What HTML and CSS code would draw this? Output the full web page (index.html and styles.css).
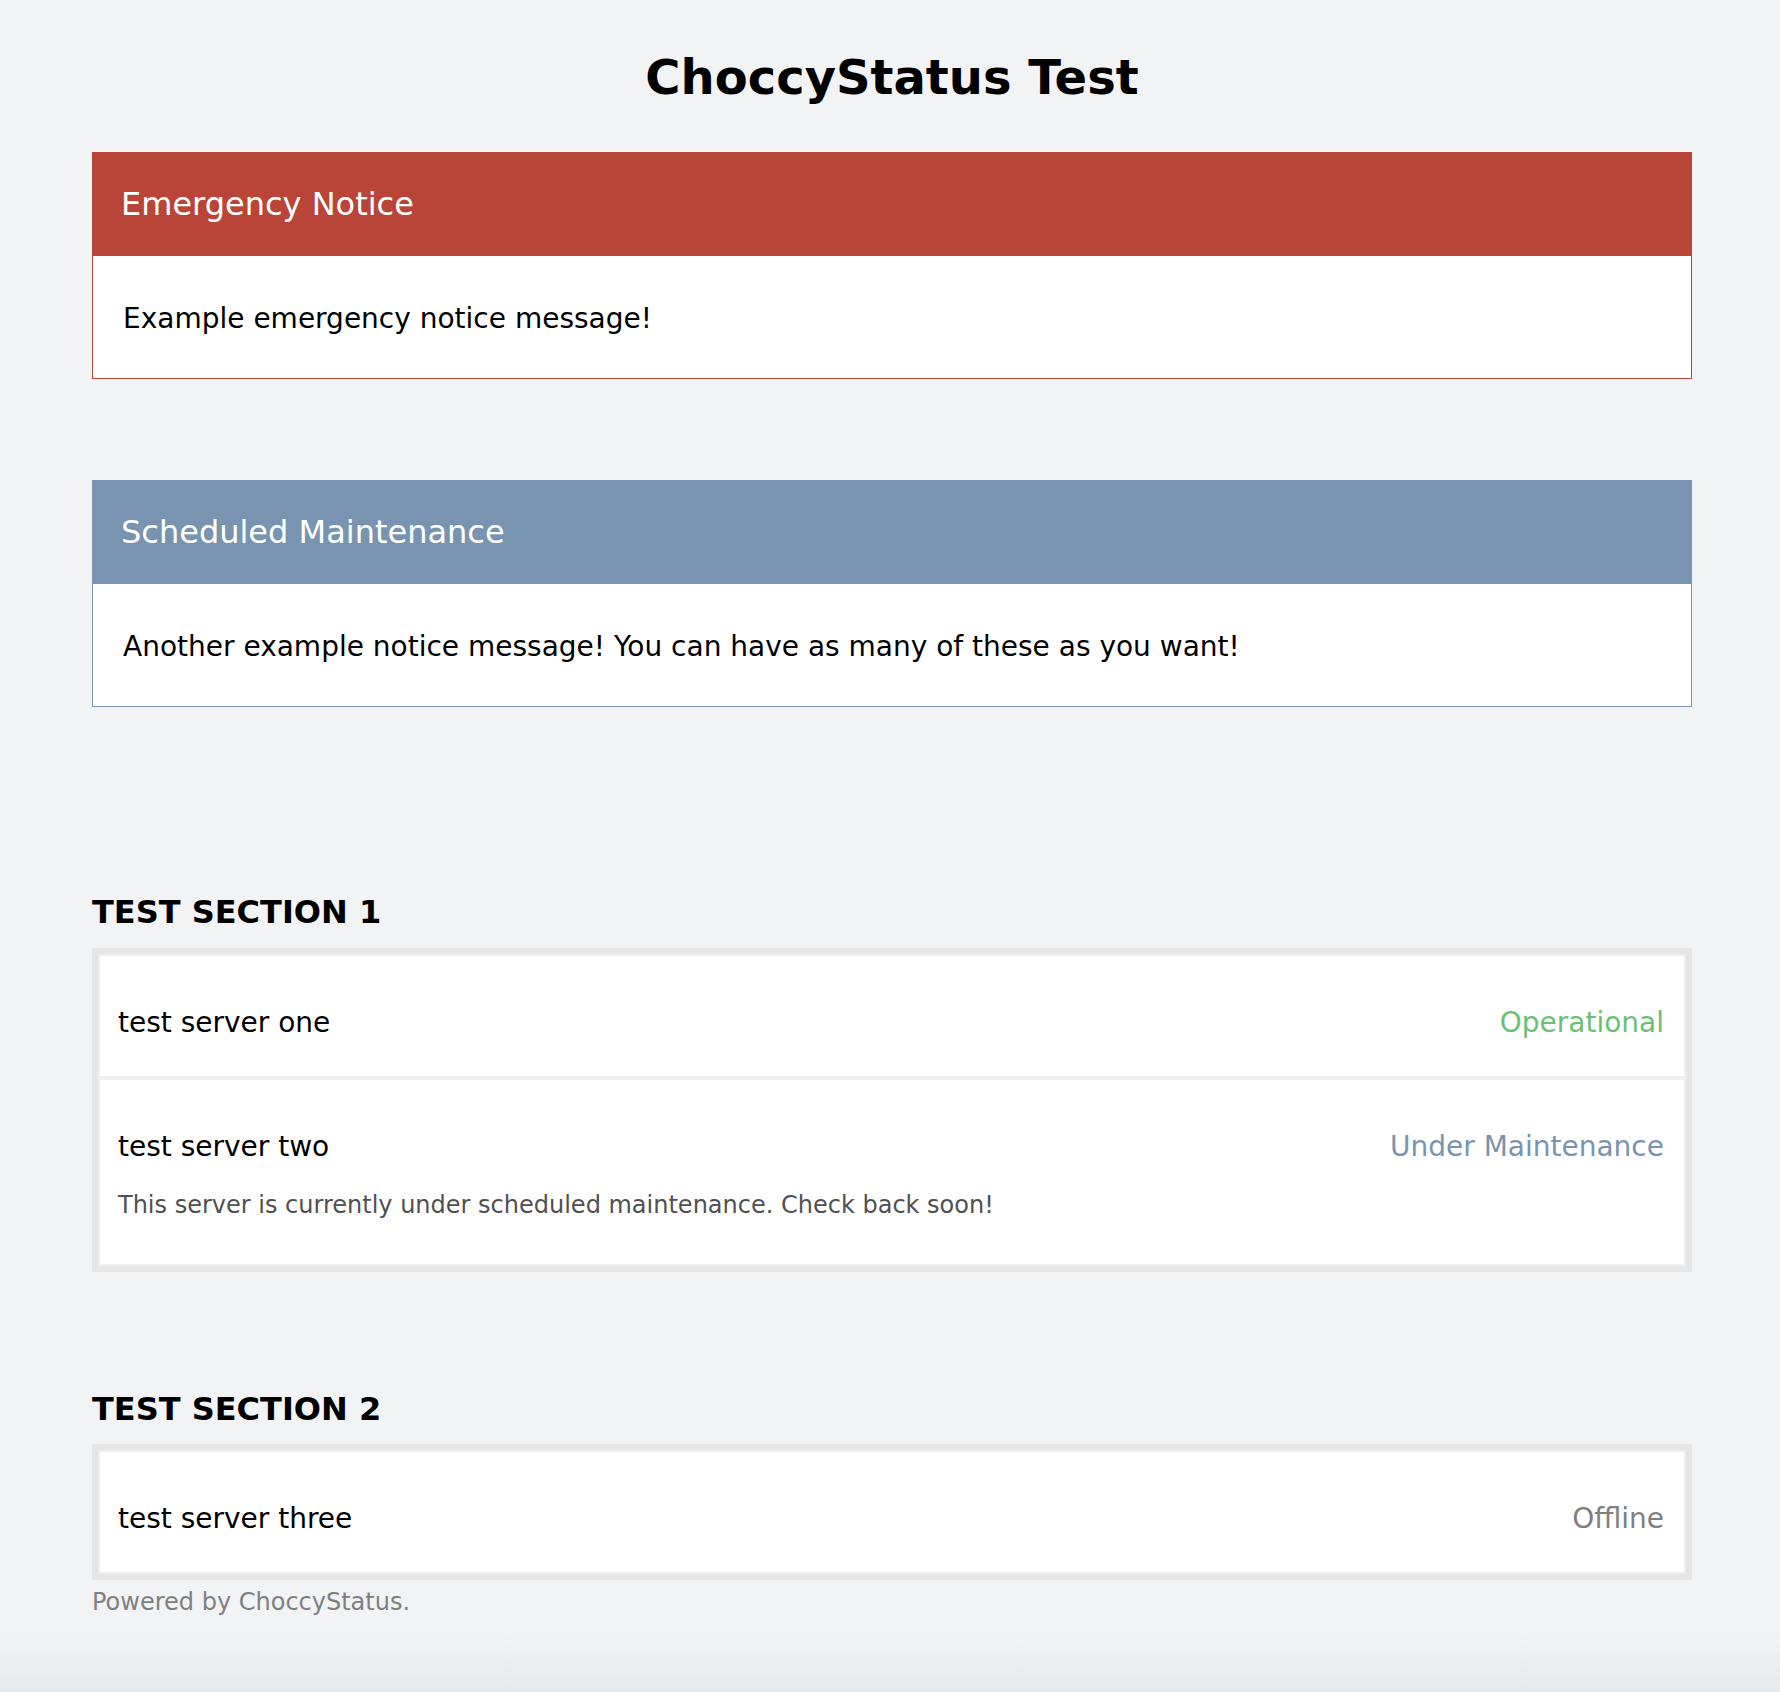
FILE: index.html
```html
<!DOCTYPE html>
<html lang="en">
<head>
<meta charset="utf-8">
<title>ChoccyStatus Test</title>
<link rel="stylesheet" href="styles.css">
</head>
<body>
<div class="page">
  <h1 class="title">ChoccyStatus Test</h1>

  <div class="notice notice-red">
    <div class="notice-head">Emergency Notice</div>
    <div class="notice-body">Example emergency notice message!</div>
  </div>

  <div class="notice notice-blue">
    <div class="notice-head">Scheduled Maintenance</div>
    <div class="notice-body">Another example notice message! You can have as many of these as you want!</div>
  </div>

  <h2 class="section-title first">TEST SECTION 1</h2>
  <div class="list">
    <div class="item">
      <div class="row">
        <span class="name">test server one</span>
        <span class="status ok">Operational</span>
      </div>
    </div>
    <div class="item">
      <div class="row">
        <span class="name">test server two</span>
        <span class="status maint">Under Maintenance</span>
      </div>
      <p class="desc">This server is currently under scheduled maintenance. Check back soon!</p>
    </div>
  </div>

  <h2 class="section-title">TEST SECTION 2</h2>
  <div class="list">
    <div class="item">
      <div class="row">
        <span class="name">test server three</span>
        <span class="status off">Offline</span>
      </div>
    </div>
  </div>

  <p class="footer">Powered by ChoccyStatus.</p>
</div>
</body>
</html>
```

FILE: styles.css
```css
html, body {
  margin: 0;
  padding: 0;
}

body {
  min-height: 100vh;
  background: linear-gradient(to bottom, #f2f3f5 0, #f2f3f5 calc(100% - 60px), #e8e9eb 100%);
  font-family: "DejaVu Sans", Verdana, sans-serif;
  color: #000;
}

.page {
  width: 1600px;
  margin-left: 92px;
  padding-bottom: 60px;
}

.title {
  margin: 0;
  padding-top: 49px;
  font-size: 48px;
  line-height: 56px;
  font-weight: bold;
  text-align: center;
}

.notice {
  border: 1px solid;
  background: #fff;
}

.notice-red {
  margin-top: 47px;
  border-color: #b84537;
}

.notice-blue {
  margin-top: 101px;
  border-color: #7994b0;
}

.notice-red .notice-head {
  background: #b84537;
}

.notice-blue .notice-head {
  background: #7994b0;
}

.notice-head {
  color: #fff;
  font-size: 32px;
  line-height: 37px;
  padding: 33px 28px 33px;
}

.notice-body {
  font-size: 28px;
  line-height: 33px;
  padding: 46px 30px 43px;
}

.section-title {
  margin: 119px 0 16px;
  font-size: 32px;
  line-height: 37px;
  font-weight: bold;
}

.section-title.first {
  margin-top: 187px;
  margin-bottom: 17px;
}

.list {
  border: 6px solid #e6e6e6;
  background: #e6e6e6;
}

.item {
  background: #fff;
  border: 2px solid #efefef;
  padding: 50px 20px 37px 18px;
}

.row {
  display: flex;
  justify-content: space-between;
  align-items: baseline;
  font-size: 28px;
  line-height: 33px;
}

.status.ok {
  color: #6cc074;
}

.status.maint {
  color: #7994b0;
}

.status.off {
  color: #808080;
}

.desc {
  margin: 28px 0 8px;
  font-size: 24px;
  line-height: 28px;
  color: #505050;
}

.footer {
  margin: 8px 0 0;
  font-size: 24px;
  line-height: 28px;
  color: #808080;
}
```
